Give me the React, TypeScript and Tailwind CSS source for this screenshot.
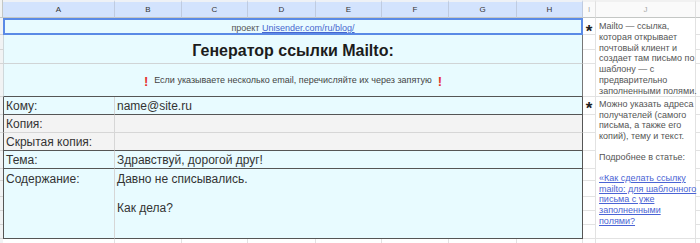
import React from "react";

const line = "border-[#e2e2e2]";

export default function App() {
  const rowsI = [2, 3, 4, 5, 6, 7, 8, 9, 10, 11, 12, 13, 14];
  const rowStart: Record<number, string> = {
    2: "row-start-2",
    3: "row-start-3",
    4: "row-start-4",
    5: "row-start-5",
    6: "row-start-6",
    7: "row-start-7",
    8: "row-start-8",
    9: "row-start-9",
    10: "row-start-10",
    11: "row-start-11",
    12: "row-start-12",
    13: "row-start-13",
    14: "row-start-14",
  };
  const letters = ["A", "B", "C", "D", "E", "F", "G", "H"];
  const colStart: Record<number, string> = {
    1: "col-start-1",
    2: "col-start-2",
    3: "col-start-3",
    4: "col-start-4",
    5: "col-start-5",
    6: "col-start-6",
    7: "col-start-7",
    8: "col-start-8",
    9: "col-start-9",
    10: "col-start-10",
    11: "col-start-11",
    12: "col-start-12",
  };

  return (
    <div
      className="w-[700px] h-[243px] overflow-hidden bg-white text-[#333]"
      style={{ fontFamily: '"Liberation Sans", Arial, sans-serif' }}
    >
      <div className="grid h-[243px] grid-cols-[3px_112px_67px_66px_68px_66px_67px_68px_66px_13px_100px_1fr] grid-rows-[18px_17px_15px_14px_33px_18px_18px_18px_18px_12px_16px_14px_14px_14px_1fr]">
        {/* Header row */}
        <div className="col-start-1 row-start-1 bg-[#f1f3f4] border-b border-r border-[#c4c7c5]" />
        {letters.map((l, i) => (
          <div
            key={l}
            className={`${colStart[i + 2]} row-start-1 bg-[#d3e3fd] border-t-2 border-t-[#eef1f6] border-b border-b-[#c4c7c5] border-r border-r-[#bfcbe0] flex items-center justify-center text-[8px] text-[#333]`}
          >
            {l}
          </div>
        ))}
        <div className="col-start-10 row-start-1 bg-[#fafafa] border-t-2 border-t-[#f1f1f1] border-b border-b-[#c4c7c5] border-r border-r-[#e0e0e0] flex items-center justify-center text-[8px] text-[#aaa]">
          I
        </div>
        <div className="col-start-11 row-start-1 bg-[#fafafa] border-t-2 border-t-[#f1f1f1] border-b border-b-[#c4c7c5] border-r border-r-[#e0e0e0] flex items-center justify-center text-[8px] text-[#aaa]">
          J
        </div>
        <div className="col-start-12 row-start-1 bg-[#fafafa] border-t-2 border-t-[#f1f1f1] border-b border-b-[#c4c7c5]" />

        {/* Row header column */}
        {rowsI.map((r) => (
          <div key={"rh" + r} className={`col-start-1 ${rowStart[r]} bg-[#f1f3f4] border-b border-[#d5d5d5]`} />
        ))}
        <div className="col-start-1 row-start-15 bg-[#f1f3f4]" />

        {/* Row 1 */}
        <div className="col-start-2 col-end-10 row-start-2 row-end-3 bg-[#e8fbff] border-2 border-[#5a8ae6] flex items-center justify-center text-[9px] leading-[11px] text-[#555]">
          <span className="translate-y-[2px]">
            проект <span className="text-[#4766cf] underline">Unisender.com/ru/blog/</span>
          </span>
        </div>

        {/* Row 2 title */}
        <div className="col-start-2 col-end-10 row-start-3 row-end-5 bg-[#e8fbff] border-l border-[#cfd8db] border-r border-r-[#777] border-b border-b-[#d0d4d6] flex items-center justify-center pt-[3px]">
          <span className="text-[16px] font-bold text-[#1c1c1c]">Генератор ссылки Mailto:</span>
        </div>

        {/* Row 3 notice */}
        <div className="col-start-2 col-end-10 row-start-5 row-end-6 bg-[#e8fbff] border-l border-l-[#cfd8db] border-r border-r-[#777] border-b border-b-[#555] flex items-center justify-center text-[9px] text-[#444] pt-[2px]">
          <span className="text-[#e5322d] font-bold text-[13px] leading-none mr-[6px]">!</span>
          <span>Если указываете несколько email, перечисляйте их через запятую</span>
          <span className="text-[#e5322d] font-bold text-[13px] leading-none ml-[6px]">!</span>
        </div>

        {/* Row 4 Кому */}
        <div className="col-start-2 row-start-6 bg-[#e8fbff] border-l border-l-[#555] border-r border-r-[#d6d6d6] border-b border-b-[#555] pl-[2px] pt-[1px] text-[12px] leading-[17px]">
          Кому:
        </div>
        <div className="col-start-3 col-end-10 row-start-6 bg-[#e8fbff] border-r border-r-[#555] border-b border-b-[#555] pl-[2px] pt-[1px] text-[12px] leading-[17px]">
          name@site.ru
        </div>

        {/* Row 5 Копия */}
        <div className="col-start-2 row-start-7 bg-[#f3f3f3] border-l border-l-[#555] border-r border-r-[#d6d6d6] border-b border-b-[#d6d6d6] pl-[2px] pt-[1px] text-[12px] leading-[17px]">
          Копия:
        </div>
        <div className="col-start-3 col-end-10 row-start-7 bg-[#f3f3f3] border-r border-r-[#555] border-b border-b-[#d6d6d6]" />

        {/* Row 6 Скрытая копия */}
        <div className="col-start-2 row-start-8 bg-[#f3f3f3] border-l border-l-[#555] border-r border-r-[#d6d6d6] border-b border-b-[#555] pl-[2px] pt-[1px] text-[12px] leading-[17px]">
          Скрытая копия:
        </div>
        <div className="col-start-3 col-end-10 row-start-8 bg-[#f3f3f3] border-r border-r-[#555] border-b border-b-[#555]" />

        {/* Row 7 Тема */}
        <div className="col-start-2 row-start-9 bg-[#e8fbff] border-l border-l-[#555] border-r border-r-[#d6d6d6] border-b border-b-[#555] pl-[2px] pt-[1px] text-[12px] leading-[17px]">
          Тема:
        </div>
        <div className="col-start-3 col-end-10 row-start-9 bg-[#e8fbff] border-r border-r-[#555] border-b border-b-[#555] pl-[2px] pt-[1px] text-[12px] leading-[17px]">
          Здравствуй, дорогой друг!
        </div>

        {/* Row 8 Содержание */}
        <div className="col-start-2 row-start-10 row-end-15 bg-[#e8fbff] border-l border-l-[#555] border-r border-r-[#d6d6d6] border-b border-b-[#555] pl-[2px] pt-[3px] text-[12px] leading-[14.5px]">
          Содержание:
        </div>
        <div className="col-start-3 col-end-10 row-start-10 row-end-15 bg-[#e8fbff] border-r border-r-[#555] border-b border-b-[#555] pl-[2px] pt-[3px] text-[12px] leading-[14.5px]">
          <div>Давно не списывались.</div>
          <div>&nbsp;</div>
          <div>Как дела?</div>
        </div>

        {/* Column I */}
        {rowsI.map((r) => (
          <div
            key={"i" + r}
            className={`col-start-10 ${rowStart[r]} border-b border-r ${line} flex justify-center`}
          >
            {r === 2 && <span className="text-[17px] font-bold text-[#222] leading-none mt-[5px]">*</span>}
            {r === 6 && <span className="text-[17px] font-bold text-[#222] leading-none mt-[3px]">*</span>}
          </div>
        ))}

        {/* Column J */}
        <div className={`col-start-11 row-start-2 row-end-6 border-b border-r ${line} pl-[3px] pt-[3px] text-[9px] leading-[10.8px] text-[#555] whitespace-nowrap`}>
          Mailto — ссылка,
          <br />
          которая открывает
          <br />
          почтовый клиент и
          <br />
          создает там письмо по
          <br />
          шаблону — с
          <br />
          предварительно
          <br />
          заполненными полями.
        </div>
        <div className={`col-start-11 row-start-6 row-end-15 border-b border-r ${line} pl-[3px] pt-[2px] text-[9px] leading-[10.6px] text-[#555] whitespace-nowrap`}>
          Можно указать адреса
          <br />
          получателей (самого
          <br />
          письма, а также его
          <br />
          копий), тему и текст.
          <br />
          <br />
          Подробнее в статье:
          <br />
          <br />
          <span className="text-[#4a63d4] underline">
            «Как сделать ссылку
            <br />
            mailto: для шаблонного
            <br />
            письма с уже
            <br />
            заполненными
            <br />
            полями?
          </span>
        </div>

        {/* Column K (rest) */}
        {rowsI.map((r) => (
          <div key={"k" + r} className={`col-start-12 ${rowStart[r]} border-b ${line}`} />
        ))}

        {/* Bottom partial row */}
        {[2, 3, 4, 5, 6, 7, 8, 9, 10, 11].map((c) => (
          <div key={"b" + c} className={`${colStart[c]} row-start-15 border-r ${line}`} />
        ))}
      </div>
    </div>
  );
}
